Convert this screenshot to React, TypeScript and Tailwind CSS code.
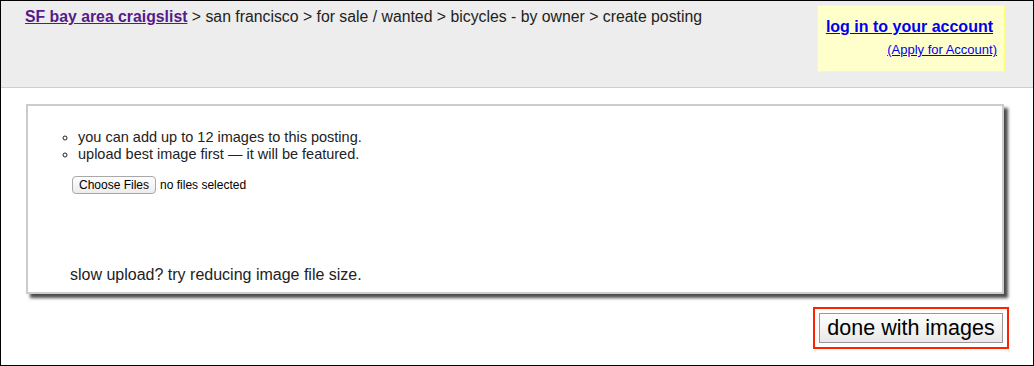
export default function App() {
  return (
    <div className="w-[1034px] h-[366px] border border-black bg-white font-['Liberation_Sans',Arial,sans-serif] text-[#222] overflow-hidden">
      {/* header */}
      <div className="h-[87px] bg-[#ededed] border-b border-[#cfcfcf] flex justify-between pl-[24px] pr-[28px]">
        <div className="pt-[6px] text-[15.8px] leading-[19px]">
          <a href="#" className="font-bold text-[#551a8b] underline">SF bay area craigslist</a>
          <span> &gt; san francisco &gt; for sale / wanted &gt; bicycles - by owner &gt; create posting</span>
        </div>
        <div className="mt-[4px] h-[67px] w-[188px] bg-[#ffffcc] border border-[#ffff80] flex flex-col items-end pr-[7px] pt-[11px]">
          <a href="#" className="mr-[4px] font-bold text-[16px] leading-[19px] text-[#0000ee] underline">log in to your account</a>
          <a href="#" className="mt-[6px] text-[13px] leading-[15px] text-[#0000ee] underline">(Apply for Account)</a>
        </div>
      </div>

      {/* panel */}
      <div className="mt-[16px] ml-[25px] w-[978px] h-[190px] border-2 border-[#cccccc] bg-white shadow-[4px_4px_3px_rgba(0,0,0,0.7)] pl-[40px] pt-[23px] flex flex-col">
        <ul className="list-[circle] pl-[10px] text-[14.5px] leading-[17px]">
          <li>you can add up to 12 images to this posting.</li>
          <li>upload best image first — it will be featured.</li>
        </ul>
        <div className="mt-[13px] flex items-center gap-[4px] ml-[4px]">
          <button className="h-[18px] px-[6px] text-[12px] leading-[16px] border border-[#a8a8a8] rounded-[4px] bg-gradient-to-b from-white to-[#ececec] text-black">Choose Files</button>
          <span className="text-[12px] text-black">no files selected</span>
        </div>
        <div className="mt-auto mb-[8px] text-[16px] leading-[19px] pl-[2px]">slow upload? try reducing image file size.</div>
      </div>

      {/* done */}
      <div className="flex justify-end pr-[24px] mt-[13px]">
        <div className="w-[196px] border-2 border-[#ff2200] p-[4px]">
          <button className="w-full h-[30px] text-[21.5px] leading-[26px] text-black border border-[#999] bg-gradient-to-b from-white to-[#e8e8e8]">done with images</button>
        </div>
      </div>
    </div>
  );
}
